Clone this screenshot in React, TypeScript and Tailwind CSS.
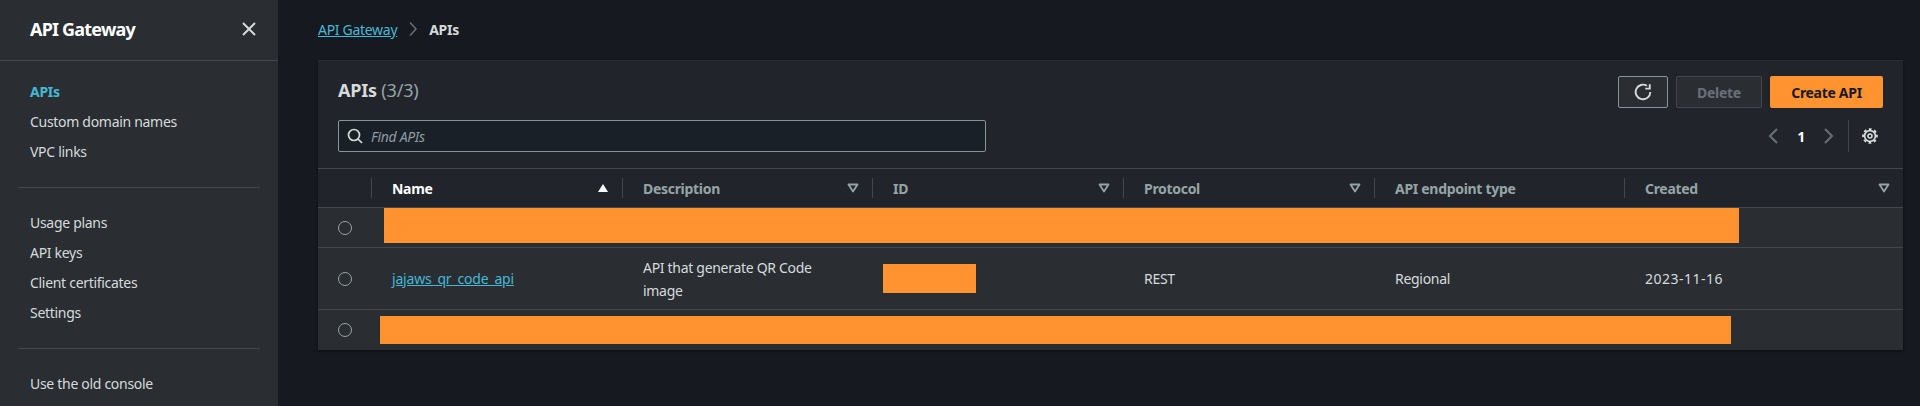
import React from "react";

const Triangle = ({ filled = false }: { filled?: boolean }) =>
  filled ? (
    <svg width="12" height="10" viewBox="0 0 12 10" className="shrink-0">
      <path d="M6 1 L11 9 H1 Z" fill="#ffffff" />
    </svg>
  ) : (
    <svg width="12" height="10" viewBox="0 0 12 10" className="shrink-0">
      <path d="M1.5 1.5 H10.5 L6 8.5 Z" fill="none" stroke="#95a5a6" strokeWidth="1.8" strokeLinejoin="round" />
    </svg>
  );

const Radio = () => (
  <div className="w-[14px] h-[14px] rounded-full border border-[#95a5a6]" />
);

const RadioCell = () => (
  <div className="w-[53px] shrink-0 flex items-center pl-[20px]">
    <Radio />
  </div>
);

const NavItem = ({ children, active = false }: { children: React.ReactNode; active?: boolean }) => (
  <div className={active ? "h-[30px] leading-[30px] text-[14px] font-bold text-[#44b9d6]" : "h-[30px] leading-[30px] text-[14px] text-[#d5dbdb]"}>
    {children}
  </div>
);

const columns = [
  { label: "Name", sort: true },
  { label: "Description", sort: true },
  { label: "ID", sort: true },
  { label: "Protocol", sort: true },
  { label: "API endpoint type", sort: false },
  { label: "Created", sort: true },
];
const gridCols = "grid grid-cols-[53px_251px_250px_251px_251px_250px_1fr]";

export default function App() {
  return (
    <div className="flex w-[1920px] h-[406px] overflow-hidden bg-[#16191f] font-['Noto_Sans','Open_Sans',sans-serif] text-[14px] tracking-[-0.3px] text-[#d5dbdb]">
      <aside className="w-[278px] shrink-0 bg-[#2a2e33]">
        <div className="h-[61px] pb-[2px] border-b border-[#414750] flex items-center justify-between pl-[30px] pr-[21px]">
          <span className="text-[18px] font-bold text-white tracking-[-0.8px]">API Gateway</span>
          <svg width="16" height="16" viewBox="0 0 16 16" fill="none" stroke="#d5dbdb" strokeWidth="2">
            <path d="M2 2 L14 14 M14 2 L2 14" />
          </svg>
        </div>
        <div className="pl-[30px] pt-[16px] pb-[20px]">
          <NavItem active>APIs</NavItem>
          <NavItem>Custom domain names</NavItem>
          <NavItem>VPC links</NavItem>
        </div>
        <div className="mx-[18px] border-t border-[#414750]" />
        <div className="pl-[30px] pt-[20px] pb-[20px]">
          <NavItem>Usage plans</NavItem>
          <NavItem>API keys</NavItem>
          <NavItem>Client certificates</NavItem>
          <NavItem>Settings</NavItem>
        </div>
        <div className="mx-[18px] border-t border-[#414750]" />
        <div className="pl-[30px] pt-[20px]">
          <NavItem>Use the old console</NavItem>
        </div>
      </aside>

      <main className="flex-1 pl-[40px] pr-[17px]">
        <div className="h-[60px] pb-[2px] flex items-center gap-[12px]">
          <span className="text-[#44b9d6] underline">API Gateway</span>
          <svg width="8" height="14" viewBox="0 0 8 14" fill="none" stroke="#687078" strokeWidth="1.5">
            <path d="M1 0.5 L7 7 L1 13.5" />
          </svg>
          <span className="font-bold text-[#d5dbdb]">APIs</span>
        </div>

        <section className="bg-[#21252b] shadow-[0_1px_2px_#0b0d10]">
          <div className="h-[108px] border-t border-[#2a2e33] pl-[20px] pr-[20px] flex justify-between">
            <div className="pt-[15px]">
              <div className="text-[18px] leading-[29px] font-bold text-[#d5dbdb] tracking-[-0.2px]">
                APIs <span className="font-normal text-[#95a5a6]">(3/3)</span>
              </div>
              <div className="mt-[15px] w-[648px] h-[32px] bg-[#1a2027] border border-[#879596] rounded-[2px] flex items-center pl-[8px] gap-[8px]">
                <svg width="16" height="16" viewBox="0 0 16 16" fill="none" stroke="#d5dbdb" strokeWidth="1.7">
                  <circle cx="7" cy="7" r="5.5" />
                  <path d="M11 11 L15 15" />
                </svg>
                <span className="italic text-[#8d9ba3] text-[14px]">Find APIs</span>
              </div>
            </div>
            <div className="flex flex-col items-end pt-[15px]">
              <div className="flex gap-[8px]">
                <div className="w-[50px] h-[32px] bg-[#2a2e33] border border-[#879596] rounded-[2px] flex items-center justify-center">
                  <svg width="18" height="18" viewBox="0 0 16 16" fill="none" stroke="#d5dbdb" strokeWidth="1.7">
                    <path d="M14.5 8 A6.5 6.5 0 1 1 11.5 2.5" />
                    <path d="M14 1 V5 H10" />
                  </svg>
                </div>
                <div className="w-[86px] h-[32px] bg-[#2a2e33] border border-[#414750] rounded-[2px] flex items-center justify-center font-bold text-[#687078]">
                  Delete
                </div>
                <div className="w-[113px] h-[32px] bg-[#ff9330] rounded-[2px] flex items-center justify-center font-bold text-[#16191f]">
                  Create API
                </div>
              </div>
              <div className="mt-[12px] h-[32px] flex items-center">
                <svg width="12" height="16" viewBox="0 0 12 16" fill="none" stroke="#687078" strokeWidth="2">
                  <path d="M10 1 L3 8 L10 15" />
                </svg>
                <span className="mx-[18px] font-bold text-white">1</span>
                <svg width="12" height="16" viewBox="0 0 12 16" fill="none" stroke="#687078" strokeWidth="2">
                  <path d="M2 1 L9 8 L2 15" />
                </svg>
                <div className="ml-[13px] h-[32px] border-l border-[#414750]" />
                <svg width="16" height="16" viewBox="0 0 16 16" fill="none" stroke="#d5dbdb" className="ml-[13px] mr-[5px]">
                  <circle cx="8" cy="8" r="5.4" strokeWidth="1.7" />
                  <circle cx="8" cy="8" r="6.9" strokeWidth="1.9" strokeDasharray="2.7 2.72" strokeDashoffset="1.35" />
                  <circle cx="8" cy="8" r="2" strokeWidth="1.6" />
                </svg>
              </div>
            </div>
          </div>

          <div className={`${gridCols} h-[40px] border-t border-b border-[#414750] items-center`}>
            <div />
            {columns.map((c, i) => (
              <div key={c.label} className="h-[20px] border-l border-[#414750] pl-[20px] pr-[13px] flex items-center justify-between">
                <span className={i === 0 ? "font-bold text-white" : "font-bold text-[#95a5a6]"}>{c.label}</span>
                {c.sort && <Triangle filled={i === 0} />}
              </div>
            ))}
          </div>

          <div className="flex h-[40px] bg-[#2a2e33] border-b border-[#414750]">
            <RadioCell />
            <div className="ml-[13px] w-[1355px] h-[35px] bg-[#ff9330]" />
          </div>

          <div className={`${gridCols} h-[62px] bg-[#2a2e33] border-b border-[#414750] items-center`}>
            <RadioCell />
            <div className="pl-[21px] text-[#44b9d6] underline tracking-[-0.2px]">jajaws_qr_code_api</div>
            <div className="pl-[21px] pr-[40px] leading-[23px]">API that generate QR Code image</div>
            <div className="pl-[11px]">
              <div className="w-[93px] h-[29px] bg-[#ff9330]" />
            </div>
            <div className="pl-[21px]">REST</div>
            <div className="pl-[21px]">Regional</div>
            <div className="pl-[21px] tracking-[0.5px]">2023-11-16</div>
          </div>

          <div className="flex h-[40px] bg-[#2a2e33]">
            <RadioCell />
            <div className="ml-[9px] mt-[6px] w-[1351px] h-[28px] bg-[#ff9330]" />
          </div>
        </section>
      </main>
    </div>
  );
}
